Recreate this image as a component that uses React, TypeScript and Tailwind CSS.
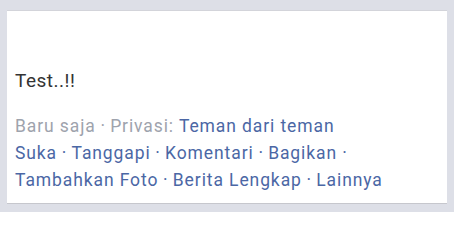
function Dot() {
  return <span className="tracking-[0.4px]"> · </span>;
}

export default function App() {
  return (
    <div
      className="w-[454px] h-[212px] bg-[#dddfe7] pt-[10px] pl-[7px]"
      style={{ fontFamily: 'Roboto, "Noto Sans", sans-serif' }}
    >
      <div className="w-[440px] h-[193px] bg-white border-t border-[#d3d4da] shadow-[0_1px_0_#c6c7cd] px-[8px]">
        <div className="h-[57px]" />
        <p className="text-[19px] leading-[26px] tracking-[0.5px] text-[#333333]">Test..!!</p>
        <div className="mt-[19px] text-[17.5px] leading-[27px] tracking-[0.9px] text-[#4b67a5]">
          <div>
            <span className="text-[#9ea3ad]">
              Baru saja<Dot />Privasi:{' '}
            </span>
            <span>Teman dari teman</span>
          </div>
          <div>
            Suka<Dot />Tanggapi<Dot />Komentari<Dot />Bagikan ·
          </div>
          <div>
            Tambahkan Foto<Dot />Berita Lengkap<Dot />Lainnya
          </div>
        </div>
      </div>
    </div>
  );
}
